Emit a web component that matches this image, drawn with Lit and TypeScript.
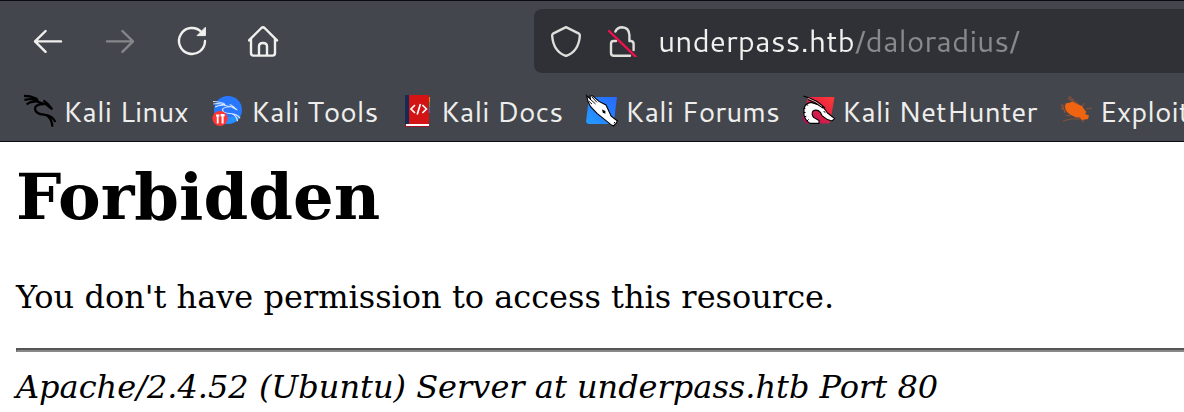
import { LitElement, html, css, svg } from "lit";
import { customElement } from "lit/decorators.js";

const dragon = svg`
  <path d="M0 .9 6 1.4 12.5 3.6 14 6.6M.4 4.8 6 4 12.5 5.4M2.6 9.4 6 7.4 13 6.2" />
  <path d="M13 6.6Q18 8.4 21.4 9L28.4 14.4M19.4 5.4Q24 8.4 27.8 13.6" />
  <path d="M20 9.2Q11 9.2 11 14 11.6 19 20 19.6 28.6 20.6 31.4 27" />
  <path d="M22.6 20.2Q28 24 28.4 31.6" />`;

const icons = {
  linux: svg`<g fill="none" stroke="#000" stroke-width="2.2">${dragon}</g>`,
  tools: svg`
    <circle cx="16" cy="15" r="14" fill="#2777ff" />
    <path d="M4 22A14 14 0 0 0 28 22Z" fill="#2590ff" />
    <g fill="none" stroke="#d6e7ff" stroke-width="1.5" transform="translate(1 6) scale(.86 .64)">${dragon}</g>
    <circle cx="8" cy="23.5" r="7.6" fill="#ff3535" />
    <path d="M4 19.5h3.4v2H6.6v7H4.8v-7H4ZM8.6 19h4v2.5h-1v7H9.6v-7h-1Z" fill="#fff" />`,
  docs: svg`<g transform="translate(3 0)">
    <path d="M25 2h1v6H25Z" fill="#d98c1c" /><path d="M25 7h1v5H25Z" fill="#3aa451" />
    <path d="M25 12h1v6H25Z" fill="#2c6fc4" />
    <path d="M1 0h4v30H1Z" fill="#152a55" /><path d="M5 0h20v29H5Z" fill="#d41414" />
    <path d="M2 29h23v2H2Z" fill="#fff" /><path d="M1 29h1v2h23v1H1Z" fill="#a51020" />
    <path d="m11 10-4 4 4 4M18.4 10l4 4-4 4M16.4 9l-3.2 10.4" fill="none" stroke="#fff" stroke-width="1.7" /></g>`,
  forums: svg`
    <defs><linearGradient id="f" x1="0" y1="1" x2="1" y2="0">
      <stop stop-color="#249cff" /><stop offset="1" stop-color="#2768ff" /></linearGradient></defs>
    <path d="M3 2H31L28 26 27 29H2L0 27Z" fill="url(#f)" />
    <path d="M.6.6 4.4 4 4 1 6.6.8 13 6.4 20 10 23 16.4 25 21 31.4 26 30 28.4 27.4 31 24.6 29.4 16 22.4 11 18.4 4.4 11.4 2 6.6Z" fill="#fff" stroke="#000" stroke-width="1.1" />
    <path d="m4 4 5.6 5M6 2l5 5.4M2.6 6 6 9" stroke="#000" stroke-width=".9" fill="none" />
    <path d="m16 14.4 3.4 1.6v2.8l-2.6-1Z" fill="#000" /><path d="m28 28.4.8-1.4" stroke="#000" />`,
  nethunter: svg`
    <defs><linearGradient id="n" x1="0" y1="1" x2="1" y2="0">
      <stop stop-color="#a90d60" /><stop offset=".6" stop-color="#ea2540" /><stop offset="1" stop-color="#ff3b38" /></linearGradient></defs>
    <path d="M5 2H31.4L27.6 26 26 28.6H3L0 25V20Z" fill="url(#n)" />
    <path d="M16 28.4H7Q2 25 1 20V14Q2 8.4 8 7.4L16 10 21.4 13.6 24.6 18 31.6 23.6 29 26 24.4 24.6 19 20.6 17.4 17.4Q14 13.8 10 16 8 19 10.6 22.4L16 25.6Z" fill="#fff" stroke="#000" stroke-width="1.1" />
    <path d="M.4 1 7 3.2 14 6.6 22 13M5 4.4 12 7.4 20 13" fill="none" stroke="#000" stroke-width="1.2" />
    <path d="M5 3.4 13 7 19 11.6" fill="none" stroke="#ddd" stroke-width=".8" />
    <path d="m20 16 2 .4.6 2Z" fill="#000" />
    <path d="m.4 13 2 .6M.4 17.6l2.2-.2M1.4 22l2-.8M4 26l1.6-1.6M3.4 9l1.4 1.6" stroke="#000" />`,
  exploit: svg`
    <g stroke="#ee6411" stroke-width="1.2" opacity=".4" fill="none">
      <path d="m9 1 5 5 5 4M8 3l5 4M1 11h5M1 13l5 3M3 26l8-2h9M5 20l6 1M20 23l4 4M26 14l6-1M24 8l-2 4M2 9l3 9" /></g>
    <path d="M5.6 8.4 13 6.8 17 9 22 11 24 14 26.4 17 25 19 29 20.4 28 24 22 25 20 22.6 16 22.4 10 19.4 7 17 5 13Z" fill="#ee6411" />`,
};

const bookmarks = [
  { name: "Kali Linux", icon: icons.linux },
  { name: "Kali Tools", icon: icons.tools },
  { name: "Kali Docs", icon: icons.docs },
  { name: "Kali Forums", icon: icons.forums },
  { name: "Kali NetHunter", icon: icons.nethunter },
  { name: "Exploit-DB", icon: icons.exploit },
];

@customElement("browser-toolbar")
export class BrowserToolbar extends LitElement {
  static styles = css`
    :host { display: block; }
    .bar { display: flex; align-items: center; height: 64px; padding: 8px 0 8px 12px; }
    .nav { display: flex; flex: none; width: 522px; }
    .btn { width: 72px; height: 64px; padding: 0; border: 0; background: none; color: #f0f0ee; display: grid; place-items: center; }
    .btn:disabled { color: #858689; }
    .icon { width: 32px; height: 32px; display: block; fill: none; stroke: currentColor; stroke-width: 2.4; stroke-linecap: round; stroke-linejoin: round; }
    .address { flex: 1; min-width: 0; height: 64px; display: flex; align-items: center; gap: 24px; padding-left: 16px; background: #303136; border-radius: 8px 0 0 8px; color: #dededa; }
    .address .icon { flex: none; }
    .url {
      flex: 1; min-width: 0; height: 48px; padding: 0; margin-left: -4px; border: 0; outline: 0;
      font: 30px/48px Cantarell, "Noto Sans", sans-serif;
      color: transparent; caret-color: #f0f0ee;
      background: linear-gradient(90deg, #f0f0ee 198px, #88898c 198px);
      -webkit-background-clip: text; background-clip: text;
    }
  `;
  render() {
    return html`<div class="bar">
      <nav class="nav">
        <button class="btn" aria-label="Back"><svg class="icon" viewBox="0 0 32 32"><path d="M29 16.4H3M13.6 6 3 16.4 13.6 26.8" /></svg></button>
        <button class="btn" aria-label="Forward" disabled><svg class="icon" viewBox="0 0 32 32"><path d="M3 16.4H29M18.4 6 29 16.4 18.4 26.8" /></svg></button>
        <button class="btn" aria-label="Reload"><svg class="icon" viewBox="0 0 32 32"><path d="M29 16A13 13 0 1 1 25.4 7" /><path d="M29.4 2.6v8h-8Z" fill="currentColor" stroke-width="1" /></svg></button>
        <button class="btn" aria-label="Home"><svg class="icon" viewBox="1 0 32 32"><path d="M2 15.4 14.4 3Q16 1.6 17.6 3L30 15.4M4 14V28Q4 30.6 6.4 30.6H25.6Q28 30.6 28 28V14M12 30V21.4Q12 18 16 18T20 21.4V30" /></svg></button>
      </nav>
      <div class="address">
        <svg class="icon" viewBox="0 0 32 32"><path d="M16 2.2 29 8.6Q30 9.4 29.8 11 28.6 26.6 16 31 3.4 26.6 2.2 11 2 9.4 3 8.6Z" /></svg>
        <svg class="icon" viewBox="0 0 32 32"><path d="M9.4 6.6Q11.4 2.2 16 2.2 23 2.4 23.4 10V16H25Q27.6 16.4 27.6 19V25M10 16H7.4Q5 16 5 19V28Q5 30.8 8 30.8H24" /><path d="M3 6 29.6 31.6" stroke="#f0104c" /></svg>
        <input class="url" aria-label="Address" value="underpass.htb/daloradius/" spellcheck="false" />
      </div>
    </div>`;
  }
}

@customElement("bookmark-bar")
export class BookmarkBar extends LitElement {
  static styles = css`
    :host { display: block; }
    .bar { display: flex; gap: 23px; height: 60px; padding-left: 24px; align-items: center; overflow: hidden; border-bottom: 1px solid #0c0c10; }
    .mark { display: flex; flex: none; align-items: center; gap: 7px; color: #eeeeec; text-decoration: none; white-space: nowrap; font: 28px/40px Cantarell, "Noto Sans", sans-serif; }
    .icon { width: 32px; height: 32px; display: block; overflow: visible; }
  `;
  render() {
    return html`<nav class="bar" aria-label="Bookmarks">
      ${bookmarks.map((b) => html`<a class="mark" href="#"><svg class="icon" viewBox="0 0 32 32">${b.icon}</svg><span>${b.name}</span></a>`)}
    </nav>`;
  }
}

@customElement("app-root")
export class AppRoot extends LitElement {
  static styles = css`
    :host { display: block; min-height: 100vh; overflow: hidden; background: #fff; }
    .chrome { background: #44464d; border-top: 1px solid #0c0c10; }
    .page { padding: 17px 0 0 16px; color: #000; font: 32px/37px "DejaVu Serif", serif; }
    .title { margin: 0 0 45px; font-size: 64px; line-height: 75px; font-weight: 700; }
    .text { margin: 0 0 32px; }
    .rule { margin: 0 0 17px; height: 0; border: solid; border-width: 2px 0 2px 1px; border-color: #555 #888 #888 #555; }
    .server { font-style: italic; }
  `;
  render() {
    return html`
      <header class="chrome"><browser-toolbar></browser-toolbar><bookmark-bar></bookmark-bar></header>
      <main class="page">
        <h1 class="title">Forbidden</h1>
        <p class="text">You don't have permission to access this resource.</p>
        <hr class="rule" />
        <address class="server">Apache/2.4.52 (Ubuntu) Server at underpass.htb Port 80</address>
      </main>`;
  }
}
